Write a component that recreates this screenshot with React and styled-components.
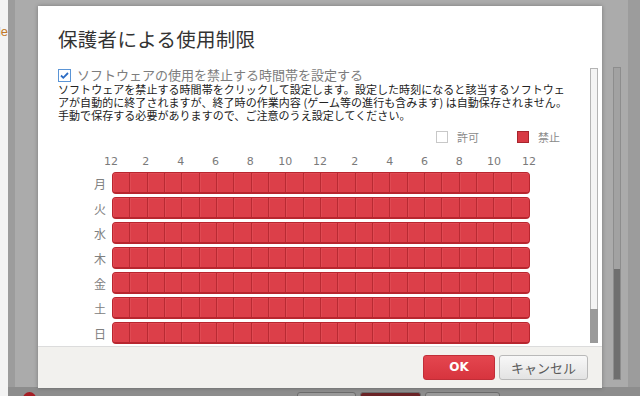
import React from 'react';
import styled, { createGlobalStyle } from 'styled-components';

const GlobalStyle = createGlobalStyle`
  html, body {
    margin: 0;
    padding: 0;
    width: 640px;
    height: 396px;
    overflow: hidden;
    background: #a3a3a3;
  }
  body {
    font-family: "Noto Sans CJK JP", "Noto Sans", sans-serif;
  }
`;

const Page = styled.div`
  position: relative;
  width: 640px;
  height: 396px;
  display: flex;
  overflow: hidden;
`;

const LeftStrip = styled.div`
  width: 8px;
  background: #f3f3f3;
  overflow: hidden;
  padding-top: 24px;
  font: 13px "Liberation Sans", sans-serif;
  color: #c0782a;
  white-space: nowrap;
  span {
    display: block;
    width: 8px;
    overflow: hidden;
    direction: rtl;
  }
`;

const Backdrop = styled.div`
  flex: 1;
  display: flex;
  flex-direction: column;
  background: #9c9c9c;
`;

const Underlay = styled.div`
  height: 387px;
  flex-shrink: 0;
  margin: 0 12px 0 7px;
  background: #ababab;
  display: flex;
  justify-content: flex-end;
  padding: 67px 7px 0 0;
  box-sizing: border-box;
`;

const UnderScroll = styled.div`
  width: 8px;
  height: 313px;
  display: flex;
  flex-direction: column;
  border: 1px solid #8d8d8d;
  box-sizing: border-box;
  background: #a2a2a2;
  div {
    margin-top: auto;
    height: 110px;
    background: #6f6f6f;
  }
`;

const BottomBar = styled.div`
  flex: 1;
  background: #8d8d8d;
  display: flex;
  align-items: flex-start;
  padding: 5px 0 0 15px;
  gap: 4px;
`;

const Dot = styled.div`
  width: 13px;
  height: 13px;
  border-radius: 50%;
  background: #a51e24;
  margin-right: 257px;
`;

const BgButton = styled.div`
  width: ${(p) => p.$w}px;
  height: 12px;
  border: 1px solid #6c6c6c;
  border-radius: 3px 3px 0 0;
  background: ${(p) => (p.$red ? '#6a2326' : '#9a9a9a')};
`;

const Dialog = styled.div`
  position: absolute;
  left: 38px;
  top: 6px;
  width: 564px;
  height: 382px;
  background: #fff;
  box-shadow: 0 0 4px rgba(0, 0, 0, 0.3);
  display: flex;
  flex-direction: column;
`;

const Header = styled.div`
  height: 58px;
  padding: 20px 0 0 20px;
  box-sizing: border-box;
`;

const Title = styled.h1`
  margin: 0;
  font-size: 19.5px;
  font-weight: 400;
  line-height: 26px;
  color: #333;
  letter-spacing: 0.3px;
`;

const Body = styled.div`
  flex: 1;
  display: flex;
  min-height: 0;
`;

const Content = styled.div`
  flex: 1;
  overflow: hidden;
  padding: 4px 0 0 20px;
`;

const InnerScroll = styled.div`
  width: 8px;
  margin: 4px 4px 3px 0;
  border: 1px solid #b4b4b4;
  box-sizing: border-box;
  background: #f4f4f4;
  display: flex;
  flex-direction: column;
  div {
    height: 34px;
    margin: auto -1px -1px;
    background: #9a9a9a;
  }
`;

const CheckRow = styled.label`
  display: flex;
  align-items: center;
  gap: 6px;
  height: 14px;
  font-size: 13px;
  color: #7d7d7d;
  line-height: 14px;
`;

const Desc = styled.p`
  margin: 1px 0 0;
  font-size: 11px;
  line-height: 13px;
  color: #222;
  letter-spacing: 0.05px;
  white-space: nowrap;
`;

const Legend = styled.div`
  display: flex;
  justify-content: flex-end;
  gap: 38px;
  margin: 8px 0 0;
  padding-right: 30px;
  height: 14px;
`;

const LegendItem = styled.div`
  display: flex;
  align-items: center;
  gap: 9px;
  font-size: 11px;
  color: #8a8a8a;
  line-height: 14px;
`;

const Swatch = styled.span`
  width: 12px;
  height: 12px;
  box-sizing: border-box;
  border: 1px solid ${(p) => (p.$on ? '#a8252d' : '#c8c8c8')};
  background: ${(p) => (p.$on ? '#d83a44' : '#fff')};
`;

const Hours = styled.div`
  display: flex;
  justify-content: space-between;
  width: 438px;
  margin: 11px 0 0 43px;
  height: 14px;
`;

const Hour = styled.span`
  width: 20px;
  text-align: center;
  font: 11px "DejaVu Sans", sans-serif;
  color: #7a7a7a;
  line-height: 14px;
`;

const Grid = styled.div`
  margin-top: 3px;
  display: flex;
  flex-direction: column;
  gap: 3px;
`;

const DayRow = styled.div`
  display: flex;
  align-items: center;
`;

const Day = styled.span`
  width: 54px;
  padding-right: 6px;
  box-sizing: border-box;
  text-align: right;
  font-size: 12px;
  color: #808080;
`;

const Cells = styled.div`
  width: 418px;
  height: 22px;
  display: grid;
  grid-template-columns: repeat(24, 1fr);
  border-radius: 4px;
  overflow: hidden;
  border: 1px solid #b8262f;
  border-bottom-width: 2px;
  box-sizing: border-box;
  background: #d93c46;
`;

const Cell = styled.span`
  border-right: 1px solid #b92a33;
  background: #dc3f49;
  box-shadow: inset 1px 1px 0 #e04a53;
  &:last-child {
    border-right: none;
  }
`;

const Footer = styled.div`
  height: 42px;
  border-top: 1px solid #dcdcdc;
  background: #f2f1ee;
  display: flex;
  align-items: center;
  justify-content: flex-end;
  gap: 4px;
  padding-right: 14px;
  box-sizing: border-box;
`;

const Button = styled.button`
  height: 25px;
  width: ${(p) => p.$w}px;
  border-radius: 3px;
  font-size: ${(p) => (p.$primary ? '12px' : '13px')};
  font-family: ${(p) =>
    p.$primary ? '"DejaVu Sans", sans-serif' : '"Noto Sans CJK JP", sans-serif'};
  font-weight: ${(p) => (p.$primary ? 700 : 400)};
  color: ${(p) => (p.$primary ? '#fff' : '#5a5a5a')};
  border: 1px solid ${(p) => (p.$primary ? '#c12e38' : '#b9b9b9')};
  background: ${(p) =>
    p.$primary
      ? 'linear-gradient(#e4464f, #d7343e)'
      : 'linear-gradient(#f8f8f8, #e3e3e3)'};
  padding: 0;
  line-height: 23px;
`;

const days = ['月', '火', '水', '木', '金', '土', '日'];
const hours = [12, 2, 4, 6, 8, 10, 12, 2, 4, 6, 8, 10, 12];

const CheckIcon = () => (
  <svg width="13" height="13" viewBox="0 0 13 13">
    <rect x="0.5" y="0.5" width="12" height="12" fill="#fff" stroke="#5b95d6" />
    <path d="M3 6.5 L5.3 8.8 L10 4" fill="none" stroke="#2c6cc4" strokeWidth="1.8" />
  </svg>
);

export default function App() {
  return (
    <>
      <GlobalStyle />
      <Page>
        <LeftStrip>
          <span>le</span>
        </LeftStrip>
        <Backdrop>
          <Underlay>
            <UnderScroll>
              <div />
            </UnderScroll>
          </Underlay>
          <BottomBar>
            <Dot />
            <BgButton $w={57} />
            <BgButton $w={59} $red />
            <BgButton $w={73} />
          </BottomBar>
        </Backdrop>

        <Dialog>
          <Header>
            <Title>保護者による使用制限</Title>
          </Header>
          <Body>
            <Content>
              <CheckRow>
                <CheckIcon />
                ソフトウェアの使用を禁止する時間帯を設定する
              </CheckRow>
              <Desc>
                ソフトウェアを禁止する時間帯をクリックして設定します。設定した時刻になると該当するソフトウェ
                <br />
                アが自動的に終了されますが、終了時の作業内容 (ゲーム等の進行も含みます) は自動保存されません。
                <br />
                手動で保存する必要がありますので、ご注意のうえ設定してください。
              </Desc>
              <Legend>
                <LegendItem>
                  <Swatch />
                  許可
                </LegendItem>
                <LegendItem>
                  <Swatch $on />
                  禁止
                </LegendItem>
              </Legend>
              <Hours>
                {hours.map((h, i) => (
                  <Hour key={i}>{h}</Hour>
                ))}
              </Hours>
              <Grid>
                {days.map((d) => (
                  <DayRow key={d}>
                    <Day>{d}</Day>
                    <Cells>
                      {Array.from({ length: 24 }, (_, i) => (
                        <Cell key={i} />
                      ))}
                    </Cells>
                  </DayRow>
                ))}
              </Grid>
            </Content>
            <InnerScroll>
              <div />
            </InnerScroll>
          </Body>
          <Footer>
            <Button $primary $w={72}>OK</Button>
            <Button $w={89}>キャンセル</Button>
          </Footer>
        </Dialog>
      </Page>
    </>
  );
}
